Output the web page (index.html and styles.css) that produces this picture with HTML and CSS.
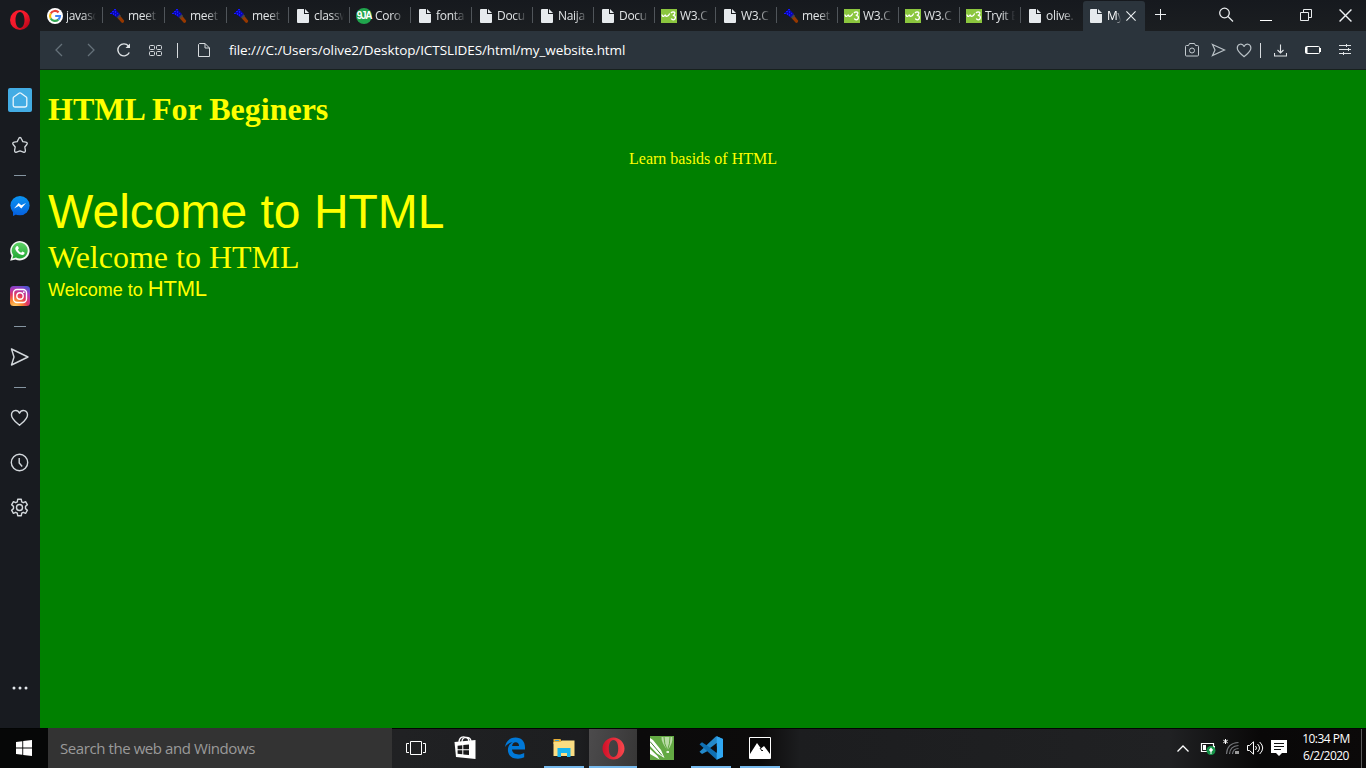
FILE: index.html
```
<!DOCTYPE html>
<html lang="en">
<head>
<meta charset="utf-8">
<title>My Website</title>
<link rel="stylesheet" href="styles.css">
</head>
<body>
<svg class="defs" aria-hidden="true">
  <defs>
    <linearGradient id="og" x1="0" y1="0" x2="1" y2="1"><stop offset="0" stop-color="#ff1b2d"/><stop offset=".5" stop-color="#f3192b"/><stop offset="1" stop-color="#a70014"/></linearGradient>
    <linearGradient id="tg" x1="0" y1="0" x2="1" y2="0"><stop offset="0" stop-color="#d01028"/><stop offset="1" stop-color="#f8464c"/></linearGradient>
    <linearGradient id="mg" x1="0" y1="0" x2="0" y2="1"><stop offset="0" stop-color="#0a95f2"/><stop offset="1" stop-color="#0662df"/></linearGradient>
    <linearGradient id="wg" x1="0" y1="0" x2="0" y2="1"><stop offset="0" stop-color="#5fd267"/><stop offset="1" stop-color="#22a634"/></linearGradient>
    <radialGradient id="ig" cx=".25" cy="1.05" r="1.15"><stop offset="0" stop-color="#ffd56a"/><stop offset=".3" stop-color="#fa8a32"/><stop offset=".55" stop-color="#e4375f"/><stop offset=".8" stop-color="#a93abb"/><stop offset="1" stop-color="#5254d0"/></radialGradient>
    <symbol id="doc" viewBox="0 0 16 16"><path fill="#e6eaed" d="M3 1h6v5h5v8q0 1-1 1H3q-1 0-1-1V2q0-1 1-1zM10 1l4 4h-4z"/></symbol>
    <symbol id="brush" viewBox="0 0 16 16"><path d="M8.500 10L11 7.500l4 5q.5 2-2 2.500z" fill="#963800"/><path d="M7.500 9l3-3 1.500 2-2.500 2.500z" fill="#45474a"/><path d="M1.500 5L6 1l5 5-3.500 3.500z" fill="#0808b4"/><path d="M5 1h2v1H5zM3 3h2v1H3zM6 3h1v2H6zM1 5h2v1H1zM4 5h1v2H4zM8 5h1v1H8zM6 6h1v2H6z" fill="#1818ff"/></symbol>
    <symbol id="w3" viewBox="0 0 16 16"><path fill="#8bc63e" d="M0 1h16v14H0z"/><path d="M1 6.500q.3 2 1.600 1.800Q4 8 4.300 6.700q.2 1.700 1.500 1.600Q7.700 8 8.700 5.500M10 5q1-1.200 2.300-1.200 1.700.1 1.500 1.700-.2 1.400-2 1.900 2.700.1 2.600 2.100-.2 2.300-2.200 2.300-1.400 0-1.900-1.200" fill="none" stroke="#fff" stroke-width="1.300"/></symbol>
    <symbol id="plane" viewBox="0 0 20 20"><path d="M1.500 2l16.500 8-16.500 8L4 10z" fill="none" stroke="currentColor" stroke-width="1.400" stroke-linejoin="round"/></symbol>
    <symbol id="heart" viewBox="0 0 20 20"><path d="M9.500 17.300C5 13.300 1.500 11 1.500 7c0-5 6-6 8-1.800 2-4.200 8-3.200 8 1.800 0 4-3.500 6.300-8 10.300z" fill="none" stroke="currentColor" stroke-width="1.400" stroke-linejoin="round"/></symbol>
    <symbol id="close" viewBox="0 0 12 12"><path d="M.5.500l11 11M11.500.500l-11 11" fill="none" stroke="#eef1f3" stroke-width="1.300"/></symbol>
  </defs>
</svg>
<div class="desktop">
  <div class="browser">
    <nav class="sidebar">
      <div class="slot opera-slot"><svg width="20" height="20" viewBox="0 0 20 20"><path fill="url(#og)" fill-rule="evenodd" d="M10 0a10 10 0 1 1 0 20 10 10 0 0 1 0-20zM10 2C7 2 5.500 6 5.500 10S7 18 10 18s4.500-4 4.500-8S13 2 10 2z"/></svg></div>
      <div class="slot"><span class="home"><svg width="16" height="16" viewBox="0 0 16 16"><path d="M1.200 6.200q0-.6.600-1.100L7 1.200q1-.7 2 0l5.200 3.900q.6.500.6 1.100V13q0 2-2 2H3.200q-2 0-2-2z" fill="none" stroke="#e8f5fc" stroke-width="1.300" stroke-linejoin="round"/></svg></span></div>
      <div class="slot"><svg width="18" height="18" viewBox="0 0 18 18"><path d="M9 1.500q1 0 1.500 1.500l1.300 2.600 3 .6q2.300.6 1 2.300l-2 2.500.6 3.400q.2 2.400-2 1.700L9 14.800l-3.400 1.300q-2.200.7-2-1.700l.6-3.400-2-2.500q-1.300-1.700 1-2.300l3-.6L7.500 3Q8 1.500 9 1.500z" fill="none" stroke="currentColor" stroke-width="1.300" stroke-linejoin="round"/></svg></div>
      <div class="dash"></div>
      <div class="slot"><svg width="20" height="20" viewBox="0 0 20 20"><circle cx="10" cy="9.600" r="9.600" fill="url(#mg)"/><path d="M3 15v5l4-2z" fill="#0662df"/><path d="M4 12.500l4.700-5.500 2.600 2.300L16 7l-4.700 5.500-2.600-2.400z" fill="#fff"/></svg></div>
      <div class="slot"><svg width="20" height="20" viewBox="0 0 20 20"><path fill="#f4f7f4" d="M.2 19.800l1.400-5A9.700 9.700 0 1 1 5.500 18.400z"/><path fill="url(#wg)" d="M2.400 17.500l.9-3.200A8 8 0 1 1 6 16.600z"/><path d="M6.500 5.300q1.300-.7 1.700.5l.7 1.500-1 1.400q1 2 3.200 3l1.300-1.300 2.100 1q.4 2.300-2.300 2.600-3 0-5.500-3.300-2.800-3.300-.2-5.400z" fill="#fff"/></svg></div>
      <div class="slot"><svg width="20" height="20" viewBox="0 0 20 20"><rect width="20" height="20" rx="3.500" fill="url(#ig)"/><g fill="none" stroke="#fff" stroke-width="1.400"><rect x="3.500" y="3.500" width="13" height="13" rx="3.500"/><circle cx="10" cy="10" r="3.200"/></g><circle cx="13.800" cy="6.200" r=".9" fill="#fff"/></svg></div>
      <div class="dash"></div>
      <div class="slot"><svg width="20" height="20"><use href="#plane"/></svg></div>
      <div class="dash"></div>
      <div class="slot"><svg width="20" height="20"><use href="#heart"/></svg></div>
      <div class="slot"><svg width="20" height="20" viewBox="0 0 20 20" fill="none" stroke="currentColor" stroke-width="1.400"><circle cx="9.500" cy="9.500" r="8.200"/><path d="M9.200 5v5l3 3.500"/></svg></div>
      <div class="slot"><svg width="20" height="20" viewBox="0 0 20 20" fill="none" stroke="currentColor" stroke-width="1.400" stroke-linejoin="round"><path d="M7.700 1.300h3.600l.4 2.500 1.600.9 2.300-1 1.800 3.100-1.900 1.600v2.200l1.900 1.600-1.800 3.100-2.300-1-1.600.9-.4 2.500H7.700l-.4-2.500-1.600-.9-2.300 1-1.800-3.100 1.900-1.600V8.400L1.600 6.800l1.800-3.100 2.300 1 1.600-.9z"/><circle cx="9.500" cy="9.500" r="3"/></svg></div>
      <div class="slot more"><svg width="16" height="4" viewBox="0 0 16 4" fill="#e3e7ea"><circle cx="2" cy="2" r="1.500"/><circle cx="8" cy="2" r="1.500"/><circle cx="14" cy="2" r="1.500"/></svg></div>
    </nav>
    <div class="main">
      <header class="tabs">
        <div class="tab wide"><svg class="ico" viewBox="0 0 16 16"><circle cx="8" cy="8" r="8" fill="#fff"/><g fill="none" stroke-width="2.200"><path d="M11.600 4.400A5 5 0 0 0 3.700 5.500" stroke="#ea4335"/><path d="M3.700 5.500a5 5 0 0 0 0 5" stroke="#fbbc05"/><path d="M3.700 10.500a5 5 0 0 0 7.600 1.200" stroke="#34a853"/><path d="M11.300 11.700A5 5 0 0 0 13 8H8.200" stroke="#4285f4"/></g></svg><span class="label">javasc</span></div>
        <div class="tab wide"><svg class="ico"><use href="#brush"/></svg><span class="label">meet</span></div>
        <div class="tab wide"><svg class="ico"><use href="#brush"/></svg><span class="label">meet</span></div>
        <div class="tab wide"><svg class="ico"><use href="#brush"/></svg><span class="label">meet</span></div>
        <div class="tab"><svg class="ico"><use href="#doc"/></svg><span class="label">classw</span></div>
        <div class="tab"><span class="ico nine">9JA</span><span class="label">Coro</span></div>
        <div class="tab"><svg class="ico"><use href="#doc"/></svg><span class="label">fonta</span></div>
        <div class="tab"><svg class="ico"><use href="#doc"/></svg><span class="label">Docu</span></div>
        <div class="tab"><svg class="ico"><use href="#doc"/></svg><span class="label">Naija</span></div>
        <div class="tab"><svg class="ico"><use href="#doc"/></svg><span class="label">Docu</span></div>
        <div class="tab"><svg class="ico"><use href="#w3"/></svg><span class="label">W3.C</span></div>
        <div class="tab"><svg class="ico"><use href="#doc"/></svg><span class="label">W3.C</span></div>
        <div class="tab"><svg class="ico"><use href="#brush"/></svg><span class="label">meet</span></div>
        <div class="tab"><svg class="ico"><use href="#w3"/></svg><span class="label">W3.C</span></div>
        <div class="tab"><svg class="ico"><use href="#w3"/></svg><span class="label">W3.C</span></div>
        <div class="tab"><svg class="ico"><use href="#w3"/></svg><span class="label">Tryit E</span></div>
        <div class="tab wide last"><svg class="ico"><use href="#doc"/></svg><span class="label">olive.</span></div>
        <div class="tab wide active"><svg class="ico"><use href="#doc"/></svg><span class="label">My</span><svg class="x" width="10" height="10"><use href="#close"/></svg></div>
        <svg class="plus" width="11" height="11" viewBox="0 0 11 11"><path d="M5.500 0v11M0 5.500h11" stroke="#eef1f3"/></svg>
        <div class="window">
          <svg class="find" width="16" height="16" viewBox="0 0 16 16" fill="none" stroke="#e8ebed" stroke-width="1.300"><circle cx="6.500" cy="6" r="4.800"/><path d="M10 9.500l5 5"/></svg>
          <svg width="12" height="13" viewBox="0 0 12 13"><path d="M0 11.500h12" stroke="#fff"/></svg>
          <svg class="restore" width="12" height="12" viewBox="0 0 12 12" fill="none" stroke="#e8ebed"><path d="M.5 3.500h8v8h-8zM3.500 3.500v-3h8v8h-3"/></svg>
          <svg width="13" height="13"><use href="#close"/></svg>
        </div>
      </header>
      <div class="address">
        <svg class="nav" width="8" height="14" viewBox="0 0 8 14"><path d="M7 1L1 7l6 6" fill="none" stroke="#65717a" stroke-width="1.300"/></svg>
        <svg class="nav" width="8" height="14" viewBox="0 0 8 14"><path d="M1 1l6 6-6 6" fill="none" stroke="#65717a" stroke-width="1.300"/></svg>
        <svg class="reload" width="14" height="14" viewBox="0 0 14 14"><path d="M12.300 9.500A6 6 0 1 1 11.500 3" fill="none" stroke="#dfe3e6" stroke-width="1.400"/><path d="M13 .5V5H8.500z" fill="#dfe3e6"/></svg>
        <svg class="grid" width="13" height="11" viewBox="0 0 13 11" fill="none" stroke="#d7dbde"><rect x=".5" y=".5" width="5" height="4" rx="1"/><rect x="7.500" y=".5" width="5" height="4" rx="1"/><rect x=".5" y="6.500" width="5" height="4" rx="1"/><rect x="7.500" y="6.500" width="5" height="4" rx="1"/></svg>
        <i class="bar"></i>
        <svg class="page-icon" width="12" height="14" viewBox="0 0 12 14"><path d="M1.500.5H7l4.500 4.500v8.500h-11v-12zM7 .5V5h4.500" fill="none" stroke="#d7dbde" stroke-linejoin="round"/></svg>
        <span class="url">file:///C:/Users/olive2/Desktop/ICTSLIDES/html/my_website.html</span>
        <div class="actions">
          <svg width="14" height="14" viewBox="0 0 14 14" fill="none" stroke="#c3cacf"><path d="M1.500 2.500h2l1-2h5l1 2h2q1 0 1 1v8.500q0 1-1 1h-11q-1 0-1-1V3.500q0-1 1-1z"/><circle cx="7" cy="7.500" r="2.500"/></svg>
          <svg class="send" width="15" height="14" viewBox="0 0 15 14"><path d="M1.500 1.500L13.500 7l-12 5.500L4 7z" fill="none" stroke="#b9c1c6" stroke-width="1.200"/></svg>
          <svg class="like" width="17" height="17"><use href="#heart"/></svg>
          <i class="bar"></i>
          <svg class="save" width="13" height="13" viewBox="0 0 13 13" fill="none" stroke="#dfe3e6" stroke-width="1.100"><path d="M6.500.5v8M3.500 6l3 3 3-3M.5 9v3h12V9"/></svg>
          <svg class="cell" width="16" height="8" viewBox="0 0 16 8" fill="none" stroke="#fff"><rect x=".5" y=".5" width="14" height="7" rx="1"/><path d="M1.500 1v6" stroke-width="2"/><path d="M15.500 2v4"/></svg>
          <svg class="tune" width="12" height="12" viewBox="0 0 12 12" stroke="#dfe3e6"><path d="M0 1.500h12M0 5.500h12M0 9.500h12M7.500 0v3M9.500 4v3M4.500 8v3"/></svg>
        </div>
      </div>
      <main class="page">
        <h1>HTML For Beginers</h1>
        <p class="lead">Learn basids of HTML</p>
        <div class="welcome-lg">Welcome to HTML</div>
        <div class="welcome-md">Welcome to HTML</div>
        <div class="welcome-sm">Welcome to <span>HTML</span></div>
      </main>
    </div>
  </div>
  <footer class="taskbar">
    <div class="start"><svg width="16" height="16" viewBox="0 0 16 16" fill="#fff"><path d="M0 2l6.300-.8v6.300H0zM7.200 1.100L16 0v7.500H7.200zM0 8.500h6.300v6.300L0 14zM7.200 8.500H16V16l-8.800-1.100z"/></svg></div>
    <div class="search">Search the web and Windows</div>
    <div class="app"><svg width="20" height="14" viewBox="0 0 20 14" fill="none" stroke="#fff"><path d="M4.500.5h11v13h-11zM3 2.500H.5v9H3M17 2.500h2.500v9H17"/></svg></div>
    <div class="app"><svg width="22" height="24" viewBox="0 0 22 24"><path fill="#fff" d="M.5 6L21.500 4v19L2 21z"/><path d="M5 6.500C5 1 9 0 12 1.500q3 1 3 4M8 6c0-6 8-6 9-1" fill="none" stroke="#fff" stroke-width="1.300"/><path fill="#19191a" d="M3.600 9.800l4.700-.6v4H3.600zM9.300 9l5.700-.6v4.800H9.300zM3.600 14.200h4.700v4.100l-4.700-.6zM9.300 14.200H15v4.900l-5.700-.7z"/></svg></div>
    <div class="app right"><svg width="22" height="22" viewBox="0 0 22 22"><path fill="#0078d7" d="M1 10.200C1.800 4.200 5.900.5 11.500.5c6 0 9.500 4.200 9.500 9.700v2.400H8c.2 3.200 3 4.900 6.500 4.900 2.300 0 4.300-.6 5.700-1.500v4.300c-1.700.9-3.900 1.400-6.300 1.400-6 0-10-3.300-10-9 0-3.600 2-6.200 4.900-7.400C5 5.700 2.700 7.300 1 10.200zM8.100 9H15c0-2.400-1.200-3.700-3.300-3.700C9.600 5.300 8.400 7 8.100 9z"/></svg></div>
    <div class="app open right"><svg width="22" height="20" viewBox="0 0 22 20"><path fill="#e5ad37" d="M.5 1h7l1 2H21v3H.5z"/><path fill="#fbdd82" d="M.5 4h7L9 2.500h12.500V18H.5z"/><path fill="#3b9fd4" d="M2 2h4v1H2z"/><path fill="#18b5ef" d="M4.500 10h13v9H14v-4H8v4H4.500z"/></svg></div>
    <div class="app open current"><svg width="23" height="23" viewBox="0 0 22 23"><path fill="url(#tg)" fill-rule="evenodd" d="M11 .5c6 0 11 5 11 11s-5 11-11 11-11-5-11-11S5 .5 11 .5zM11 3C7.800 3 6.300 7 6.300 11.500S7.800 20 11 20s4.700-4 4.700-8.500S14.200 3 11 3z"/></svg></div>
    <div class="app right"><svg width="24" height="24" viewBox="0 0 24 24"><path fill="#63a943" d="M0 0h24v24H0z"/><path fill="#b9dba5" d="M11.500 1h10.800q1 6-4.800 13.500Q11 6 11.500 1z"/><path d="M14 1q0 7 3.300 13M20 1q0 7-2.500 13" fill="none" stroke="#63a943"/><path fill="#fff" d="M0 2l3 2 8 10 3.500 8-7.500-4.500L0 10zM0 13l7.500 7 2 3.500L0 18z"/><path d="M0 5.500l12 14" stroke="#458630" fill="none"/><path d="M16.500 15h2.500v2h-2.500z" fill="#e8f3df"/></svg></div>
    <div class="app open right"><svg width="24" height="24" viewBox="0 0 24 24"><path fill="#2489ca" d="M17.700.3L24 3v4L3 18l-2.500-2.300L16.500.7z"/><path fill="#1070b3" d="M.5 8.300L3 6.200 24 20l-6.300 3.700z"/><path fill="#30a7f2" d="M17.700.3L24 3v18l-6.300 2.700z"/><path fill="#0e0f12" d="M17.700 7v10l-6.500-5z"/></svg></div>
    <div class="app open right"><svg width="22" height="22" viewBox="0 0 22 22"><path d="M.5.500h21v21H.5z" fill="#050505" stroke="#fff"/><path fill="#fff" d="M1 17l7-11 4 5.500 3-2.500 6 8v4.500H1z"/><path d="M11 11l2 3 1-1" fill="none" stroke="#111"/></svg></div>
    <div class="tray">
      <svg width="12" height="7" viewBox="0 0 12 7"><path d="M.5 6.500L6 1l5.500 5.500" fill="none" stroke="#fff" stroke-width="1.300"/></svg>
      <svg class="power" width="16" height="14" viewBox="0 0 16 14"><path d="M1.500 2.500h12v8h-12z" fill="none" stroke="#fff" stroke-width="1.200"/><path d="M3 4h3v5H3zM14 5h1v3h-1z" fill="#fff"/><circle cx="11" cy="9.500" r="4.500" fill="#149347"/><path d="M8.800 9L11 6.500 13.200 9 11 11z" fill="#fff"/><path d="M10.500 9.500h1V13h-1z" fill="#fff"/></svg>
      <svg class="wifi" width="17" height="16" viewBox="0 0 17 16"><g fill="none" stroke="#74767a" stroke-width="1.200"><path d="M3.500 15Q4 4 15.500 3.500M6.500 15Q7 7 15.500 6.500M9.500 15q.5-5.500 6-5.500"/></g><path d="M12 12h4v3h-4z" fill="#9a9a9a"/><path d="M2.500 0v5M.3 1.200l4.400 2.600M4.700 1.200L.3 3.800" stroke="#fff"/></svg>
      <svg width="17" height="14" viewBox="0 0 17 14" fill="none" stroke="#fff"><path d="M.5 4.500h2L6.500.8v12.400L2.500 9.500h-2zM8.500 5q2 2 0 4M10.500 3q4 4 0 8M12.700 1q6 6 0 12"/></svg>
      <svg class="note" width="16" height="16" viewBox="0 0 16 16"><path fill="#fff" d="M0 0h16v13h-5l-3 3-3-3H0z"/><path d="M3 3.500h10M3 6.500h10M3 9.500h7" stroke="#111"/></svg>
      <div class="clock"><span>10:34 PM</span><span>6/2/2020</span></div>
    </div>
    <div class="peek"></div>
  </footer>
</div>
</body>
</html>
```
FILE: styles.css
```
* { box-sizing: border-box; }
body { margin: 0; overflow: hidden; background: #171b1f; }
svg { display: block; flex: none; }
.defs { position: absolute; width: 0; height: 0; }
.desktop { width: 1366px; height: 768px; display: flex; flex-direction: column; font-family: "Open Sans", "Noto Sans", sans-serif; }
.browser { height: 728px; display: flex; }
.sidebar { width: 40px; height: 728px; background: #181b20; color: #d3d8dc; display: flex; flex-direction: column; }
.slot { height: 45px; flex: none; display: flex; align-items: center; justify-content: center; }
.opera-slot { height: 40px; margin-bottom: 37px; }
.home { width: 24px; height: 24px; border-radius: 2px; background: #43ace4; display: flex; align-items: center; justify-content: center; }
.dash { height: 16px; flex: none; display: flex; align-items: center; justify-content: center; }
.dash::before { content: ""; width: 12px; height: 1px; background: #8595a1; }
.more { margin-top: auto; margin-bottom: 18px; }
.main { width: 1326px; display: flex; flex-direction: column; }
.tabs { height: 31px; padding-left: 1px; display: flex; background: linear-gradient(#16191e, #1b1e21); }
.tab { width: 61px; height: 31px; flex: none; padding: 0 0 0 6px; display: flex; align-items: center; background: linear-gradient(#50555a, #50555a) right 0 top 7px / 1px 16px no-repeat; }
.tab.wide { width: 62px; }
.tab.last { background: none; }
.tab .ico { width: 16px; height: 16px; flex: none; }
.nine { border-radius: 50%; background: #20a64d; color: #fff; font: bold 10px/16px "Liberation Sans", sans-serif; letter-spacing: -1.2px; text-align: center; }
.label { width: 31px; margin-left: 3px; white-space: nowrap; font-size: 12px; line-height: 18px; letter-spacing: -.3px; color: #e0e3e5; -webkit-mask-image: linear-gradient(90deg, #000 17px, transparent 30px); mask-image: linear-gradient(90deg, #000 17px, transparent 30px); }
.tab.active { height: 30px; margin-top: 1px; padding: 0 0 1px 5px; background: #2b343c; border-radius: 3px 3px 0 0; }
.active .label { width: 14px; color: #fff; -webkit-mask-image: linear-gradient(90deg, #000 9px, transparent 14px); mask-image: linear-gradient(90deg, #000 9px, transparent 14px); }
.x { margin-left: 5px; }
.plus { margin: 9px 0 0 10px; }
.window { margin-left: auto; padding-right: 14px; display: flex; align-items: center; gap: 27px; }
.find { margin-top: -2px; }
.window .find + svg { margin-left: -1px; }
.window .restore { margin-left: 1px; margin-top: -1px; }
.address { height: 39px; padding: 0 15px 0 15px; display: flex; align-items: center; background: #2b343c; border-bottom: 1px solid #17201e; }
.nav { margin-right: 24px; }
.nav + .nav { margin-right: 22px; }
.reload { margin-right: 18px; }
.grid { margin-right: 15px; }
.bar { width: 1px; height: 15px; flex: none; background: #d7dbde; }
.page-icon { margin-left: 20px; margin-right: 19px; }
.url { font-size: 13.5px; line-height: 20px; letter-spacing: -.09px; color: #fff; white-space: nowrap; }
.actions { margin-left: auto; display: flex; align-items: center; color: #b9c1c6; }
.send { margin-left: 12px; }
.like { margin-left: 10px; }
.actions .bar { margin-left: 7px; }
.save { margin-left: 13px; }
.cell { margin-left: 18px; }
.tune { margin-left: 18px; }
.page { flex: 1; padding: 0 8px; background: #008000; color: #ff0; font: 16px/18px "Liberation Serif", serif; }
h1 { margin: 21px 0 22px; font-size: 32px; line-height: 37px; }
.lead { margin: 0 0 16px; text-align: center; line-height: 18px; }
.welcome-lg { font: 48px/55px "Liberation Sans", sans-serif; }
.welcome-md { font-size: 32px; line-height: 36px; }
.welcome-sm { font: 18px/28px "Liberation Sans", sans-serif; }
.welcome-sm span { font-size: 22px; letter-spacing: -.2px; }
.taskbar { height: 40px; display: flex; border-top: 1px solid #030504; background: linear-gradient(90deg, #171718 0, #202123 400px, #1d1e20 580px, #0b0a0b 640px, #0c0b0b 760px, #1c1d1f 800px, #202123 1170px, #090808 1260px, #0b0909 100%); }
.start { width: 48px; flex: none; background: #060707; padding-bottom: 1px; display: flex; align-items: center; justify-content: center; }
.search { width: 344px; margin-top: -1px; padding-left: 12px; flex: none; background: #333; color: #9a9a9a; font-size: 15px; line-height: 40px; letter-spacing: -.42px; white-space: nowrap; }
.app { width: 49px; padding: 0 1px 1px 0; flex: none; display: flex; align-items: center; justify-content: center; }
.app.right { padding: 0 0 1px 1px; }
.app.open { background: linear-gradient(#76b9ed, #76b9ed) center bottom / 40px 2px no-repeat; }
.app.current { width: 48px; padding-right: 0; margin-left: 1px; background: linear-gradient(#76b9ed, #76b9ed) bottom / 48px 2px no-repeat, linear-gradient(100deg, #4c4b4c, #424142 50%, #373636); }
.tray { margin-left: auto; padding-bottom: 1px; display: flex; align-items: center; color: #fff; }
.power { margin-left: 11px; }
.wifi { margin: -2px 0 0 7px; }
.wifi + svg { margin-left: 7px; }
.note { margin-left: 7px; }
.clock { width: 68px; margin: -2px 1px 0 5px; display: flex; flex-direction: column; align-items: center; font-size: 12px; line-height: 17px; letter-spacing: -.5px; }
.peek { width: 5px; border-left: 1px solid #5b5b5b; }
```
